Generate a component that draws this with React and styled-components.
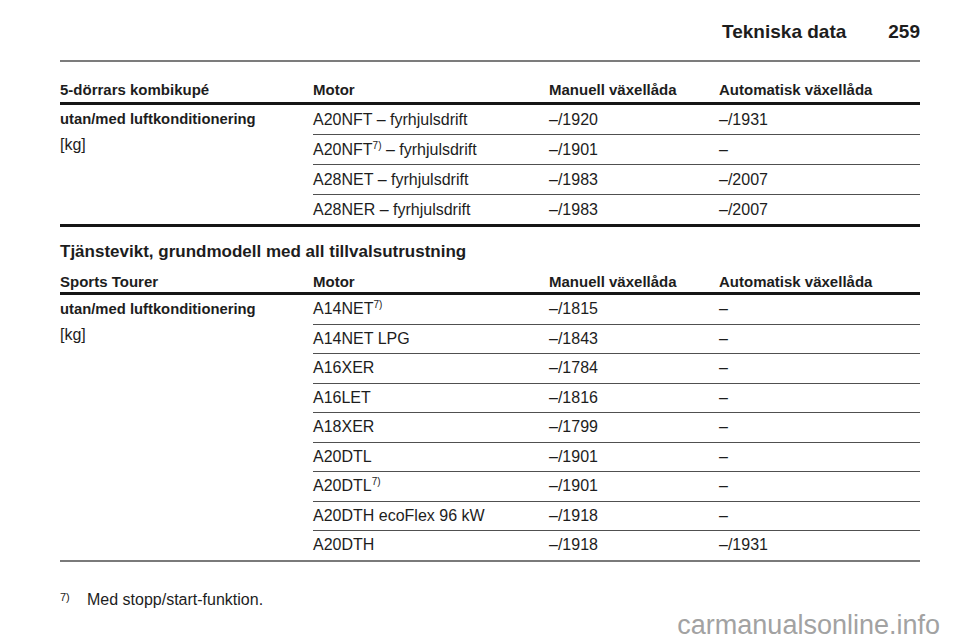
import React from 'react';
import styled, { createGlobalStyle } from 'styled-components';

const kombiRows = [
  { motor: 'A20NFT – fyrhjulsdrift', manual: '–/1920', auto: '–/1931' },
  { motor: 'A20NFT', note: true, suffix: ' – fyrhjulsdrift', manual: '–/1901', auto: '–' },
  { motor: 'A28NET – fyrhjulsdrift', manual: '–/1983', auto: '–/2007' },
  { motor: 'A28NER – fyrhjulsdrift', manual: '–/1983', auto: '–/2007' },
];

const tourerRows = [
  { motor: 'A14NET', note: true, manual: '–/1815', auto: '–' },
  { motor: 'A14NET LPG', manual: '–/1843', auto: '–' },
  { motor: 'A16XER', manual: '–/1784', auto: '–' },
  { motor: 'A16LET', manual: '–/1816', auto: '–' },
  { motor: 'A18XER', manual: '–/1799', auto: '–' },
  { motor: 'A20DTL', manual: '–/1901', auto: '–' },
  { motor: 'A20DTL', note: true, manual: '–/1901', auto: '–' },
  { motor: 'A20DTH ecoFlex 96 kW', manual: '–/1918', auto: '–' },
  { motor: 'A20DTH', manual: '–/1918', auto: '–/1931' },
];

const WeightTable = ({ title, rows, rowHeight, end, headTop }) => (
  <Table $end={end}>
    <HeadRow $top={headTop}>
      <span>{title}</span>
      <span>Motor</span>
      <span>Manuell växellåda</span>
      <span>Automatisk växellåda</span>
    </HeadRow>
    <Body>
      <Group>
        <GroupName>utan/med luftkonditionering</GroupName>
        <GroupUnit>[kg]</GroupUnit>
      </Group>
      <div>
        {rows.map((r, i) => (
          <Row key={i} $h={rowHeight}>
            <span>
              {r.motor}
              {r.note && <Sup>7)</Sup>}
              {r.suffix}
            </span>
            <span>{r.manual}</span>
            <span>{r.auto}</span>
          </Row>
        ))}
      </div>
    </Body>
  </Table>
);

const App = () => (
  <>
    <GlobalStyle />
    <Page>
      <RunningHead>
        <span>Tekniska data</span>
        <span>259</span>
      </RunningHead>
      <TopRule />
      <WeightTable title="5-dörrars kombikupé" rows={kombiRows} rowHeight={29} end="thick" headTop={19} />
      <SectionTitle>Tjänstevikt, grundmodell med all tillvalsutrustning</SectionTitle>
      <WeightTable title="Sports Tourer" rows={tourerRows} rowHeight={28.5} end="thin" headTop={9} />
      <Footnote>
        <FootMark>7)</FootMark>
        <span>Med stopp/start-funktion.</span>
      </Footnote>
      <Watermark>carmanualsonline.info</Watermark>
    </Page>
  </>
);

const GlobalStyle = createGlobalStyle`
  html, body {
    margin: 0;
    background: #ffffff;
  }
  body {
    font-family: "Liberation Sans", Arial, sans-serif;
    color: #1d1d1d;
  }
`;

const Page = styled.div`
  position: relative;
  width: 960px;
  height: 642px;
  box-sizing: border-box;
  padding: 20px 40px 0 60px;
  overflow: hidden;
`;

const RunningHead = styled.div`
  display: flex;
  justify-content: flex-end;
  gap: 42px;
  font-size: 19px;
  font-weight: 700;
  line-height: 24px;
`;

const TopRule = styled.div`
  margin-top: 16px;
  height: 2px;
  background: #7c7c7c;
`;

const Table = styled.div`
  border-bottom: ${p => (p.$end === 'thick' ? '3px solid #161616' : '2px solid #7a7a7a')};
`;

const HeadRow = styled.div`
  display: grid;
  grid-template-columns: 253px 236px 170px 1fr;
  padding: ${p => p.$top}px 0 ${p => (p.$top > 10 ? 3 : 1)}px;
  font-size: 15px;
  font-weight: 700;
  line-height: 18px;
  border-bottom: 3px solid #161616;
`;

const Body = styled.div`
  display: grid;
  grid-template-columns: 253px 1fr;
`;

const Group = styled.div`
  display: flex;
  flex-direction: column;
`;

const GroupName = styled.span`
  font-size: 14.8px;
  font-weight: 700;
  line-height: 29px;
`;

const GroupUnit = styled.span`
  font-size: 16px;
  line-height: 22px;
`;

const Row = styled.div`
  display: grid;
  grid-template-columns: 236px 170px 1fr;
  height: ${p => p.$h}px;
  line-height: ${p => p.$h}px;
  font-size: 16px;
  border-bottom: 1px solid #505050;
  white-space: nowrap;

  &:last-child {
    border-bottom: none;
  }
`;

const Sup = styled.sup`
  font-size: 10px;
  line-height: 0;
  vertical-align: 6px;
`;

const SectionTitle = styled.h2`
  margin: 13px 0 0;
  font-size: 17px;
  font-weight: 700;
  line-height: 24px;
`;

const Footnote = styled.div`
  display: flex;
  margin-top: 28px;
  font-size: 16px;
  line-height: 20px;
`;

const FootMark = styled.span`
  width: 27px;
  font-size: 11px;
  line-height: 14px;
`;

const Watermark = styled.div`
  position: absolute;
  right: 20px;
  bottom: 2px;
  font-size: 27px;
  line-height: 30px;
  color: #a2a2a2;
`;

export default App;
